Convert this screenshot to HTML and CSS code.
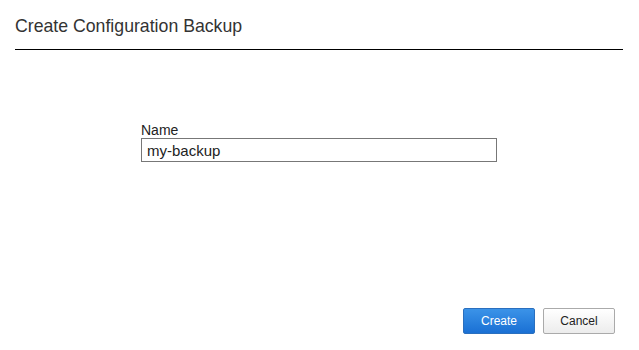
FILE: index.html
```html
<!DOCTYPE html>
<html lang="en">
<head>
    <meta charset="UTF-8">
    <meta name="viewport" content="width=device-width, initial-scale=1.0">
    <title>Create Configuration Backup</title>
    <link rel="stylesheet" href="styles.css">
</head>
<body>
    <div class="dialog">
        <div class="dialog-header">
            <h1>Create Configuration Backup</h1>
        </div>
        <div class="dialog-body">
            <div class="field">
                <label for="backupName">Name</label>
                <input type="text" id="backupName" value="my-backup">
            </div>
        </div>
        <div class="dialog-footer">
            <button class="btn btn-primary">Create</button>
            <button class="btn">Cancel</button>
        </div>
    </div>
</body>
</html>
```

FILE: styles.css
```css
body {
    margin: 0;
    font-family: "Liberation Sans", Arial, sans-serif;
    background: #fff;
    color: #333;
}

.dialog {
    height: 100vh;
    display: flex;
    flex-direction: column;
}

.dialog-header {
    margin: 0 16px 0 15px;
    height: 50px;
    border-bottom: 1px solid #000;
    box-sizing: border-box;
}

.dialog-header h1 {
    margin: 0;
    padding-top: 16px;
    font-size: 17.7px;
    font-weight: normal;
    line-height: 21px;
    color: #333;
}

.dialog-body {
    flex: 1;
    display: flex;
    justify-content: center;
    padding: 73px 1px 0 0;
}

.field {
    width: 356px;
}

.field label {
    display: block;
    font-size: 14px;
    line-height: 15px;
    color: #222;
}

.field input {
    display: block;
    width: 100%;
    height: 24px;
    box-sizing: border-box;
    margin: 0;
    padding: 0 5px;
    border: 1px solid #777;
    font-family: inherit;
    font-size: 15px;
    color: #222;
    outline: none;
}

.dialog-footer {
    display: flex;
    justify-content: flex-end;
    gap: 8px;
    padding: 0 24px 16px 0;
}

.btn {
    width: 72px;
    height: 26px;
    font-family: inherit;
    font-size: 12px;
    color: #222;
    border: 1px solid #aaa;
    border-radius: 2px;
    background: linear-gradient(#fff, #ececec);
    cursor: pointer;
}

.btn-primary {
    color: #fff;
    border-color: #2a6fbe;
    background: linear-gradient(#3b93e8, #1a70d4);
}
```
